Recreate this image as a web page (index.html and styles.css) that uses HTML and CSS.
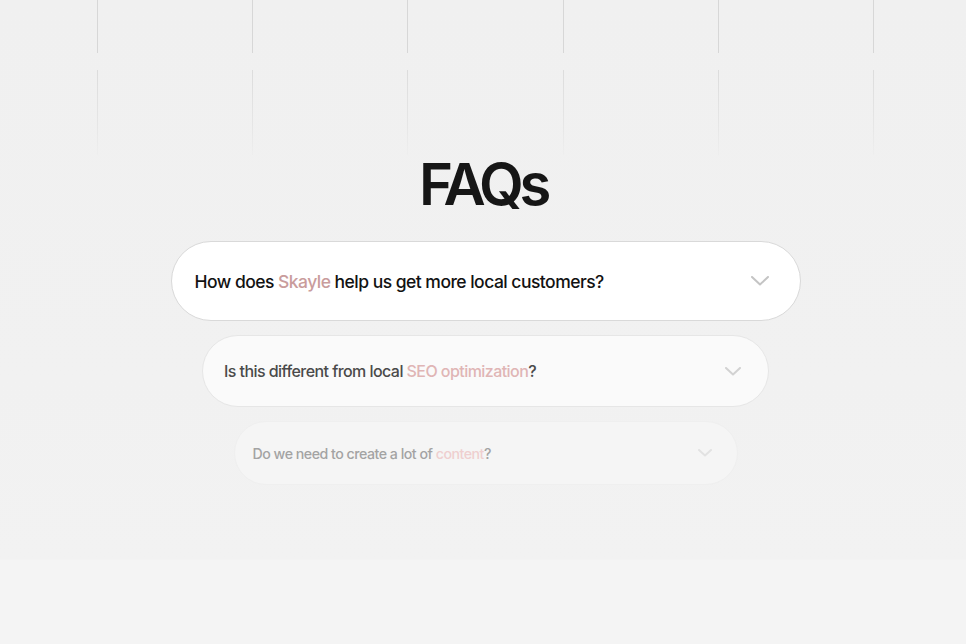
FILE: index.html
```html
<!DOCTYPE html>
<html lang="en">
<head>
    <meta charset="UTF-8">
    <meta name="viewport" content="width=device-width, initial-scale=1.0">
    <title>Skayle - FAQs</title>
    <link rel="stylesheet" href="styles.css">
</head>
<body>
    <div class="backdrop">
        <div class="backdrop-row">
            <span></span><span></span><span></span><span></span><span></span><span></span>
        </div>
        <div class="backdrop-row fade">
            <span></span><span></span><span></span><span></span><span></span><span></span>
        </div>
    </div>

    <section class="faq">
        <h1>FAQs</h1>

        <div class="faq-list">
            <div class="faq-item level-1">
                <p>How does <em>Skayle</em> help us get more local customers?</p>
                <svg class="chevron" width="18" height="10" viewBox="0 0 18 10"><polyline points="1,1 9,8.5 17,1" /></svg>
            </div>

            <div class="faq-item level-2">
                <p>Is this different from local <em>SEO optimization</em>?</p>
                <svg class="chevron" width="16" height="9" viewBox="0 0 16 9"><polyline points="1,1 8,7.5 15,1" /></svg>
            </div>

            <div class="faq-item level-3">
                <p>Do we need to create a lot of <em>content</em>?</p>
                <svg class="chevron" width="14" height="8" viewBox="0 0 14 8"><polyline points="1,1 7,6.5 13,1" /></svg>
            </div>
        </div>
    </section>
</body>
</html>
```

FILE: styles.css
```css
html, body {
    margin: 0;
    padding: 0;
}

body {
    font-family: 'Inter', 'Liberation Sans', sans-serif;
    color: #111;
    height: 644px;
    overflow: hidden;
    background: linear-gradient(180deg, #f0f0f0 0px, #f1f1f1 380px, #f2f2f2 559px, #f4f4f4 560px, #f4f4f4 644px);
}

/* thin column rules at the top of the page */
.backdrop {
    height: 155px;
    padding-left: 97px;
    overflow: hidden;
}

.backdrop-row {
    display: flex;
    height: 53px;
}

.backdrop-row span {
    width: 155.2px;
    flex: none;
    box-sizing: border-box;
    border-left: 1px solid #d7d7d7;
}

.backdrop-row.fade {
    margin-top: 17px;
    height: 92px;
}

.backdrop-row.fade span {
    border-left: 1px solid transparent;
    border-image: linear-gradient(180deg, #dcdcdc 0%, #e6e6e6 60%, rgba(240, 240, 240, 0) 100%) 1;
}

.faq {
    display: flex;
    flex-direction: column;
    align-items: center;
}

h1 {
    margin: 0;
    font-size: 58px;
    line-height: 1;
    font-weight: 600;
    letter-spacing: -0.075em;
    color: #161616;
}

.faq-list {
    margin-top: 28px;
    padding-left: 5px;
    display: flex;
    flex-direction: column;
    align-items: center;
    gap: 14px;
}

.faq-item {
    display: flex;
    align-items: center;
    justify-content: space-between;
    box-sizing: border-box;
    border-radius: 999px;
}

.faq-item p {
    margin: 0;
    letter-spacing: -0.035em;
    font-weight: 500;
}

.faq-item em {
    font-style: normal;
}

.chevron polyline {
    fill: none;
    stroke-width: 2;
    stroke-linecap: round;
    stroke-linejoin: round;
}

.level-1 {
    width: 630px;
    height: 80px;
    padding: 0 31px 0 23px;
    background-color: #fff;
    border: 1px solid #d9d9d9;
}

.level-1 p {
    font-size: 17.5px;
    letter-spacing: -0.03em;
    color: #121212;
}

.level-1 em {
    color: #c99c9c;
}

.level-1 .chevron polyline {
    stroke: #c4c4c4;
}

.level-2 {
    width: 567px;
    height: 72px;
    padding: 0 27px 0 21px;
    background-color: #fafafa;
    border: 1px solid #e6e6e6;
}

.level-2 p {
    font-size: 16px;
    color: #4a4a4a;
}

.level-2 em {
    color: #e0b5b5;
}

.level-2 .chevron polyline {
    stroke: #d2d2d2;
}

.level-3 {
    width: 504px;
    height: 64px;
    padding: 0 25px 0 18px;
    background-color: #f5f5f5;
    border: 1px solid #efefef;
}

.level-3 p {
    font-size: 14.2px;
    color: #a3a3a3;
}

.level-3 em {
    color: #efcfcf;
}

.level-3 .chevron polyline {
    stroke: #e2e2e2;
}
```
